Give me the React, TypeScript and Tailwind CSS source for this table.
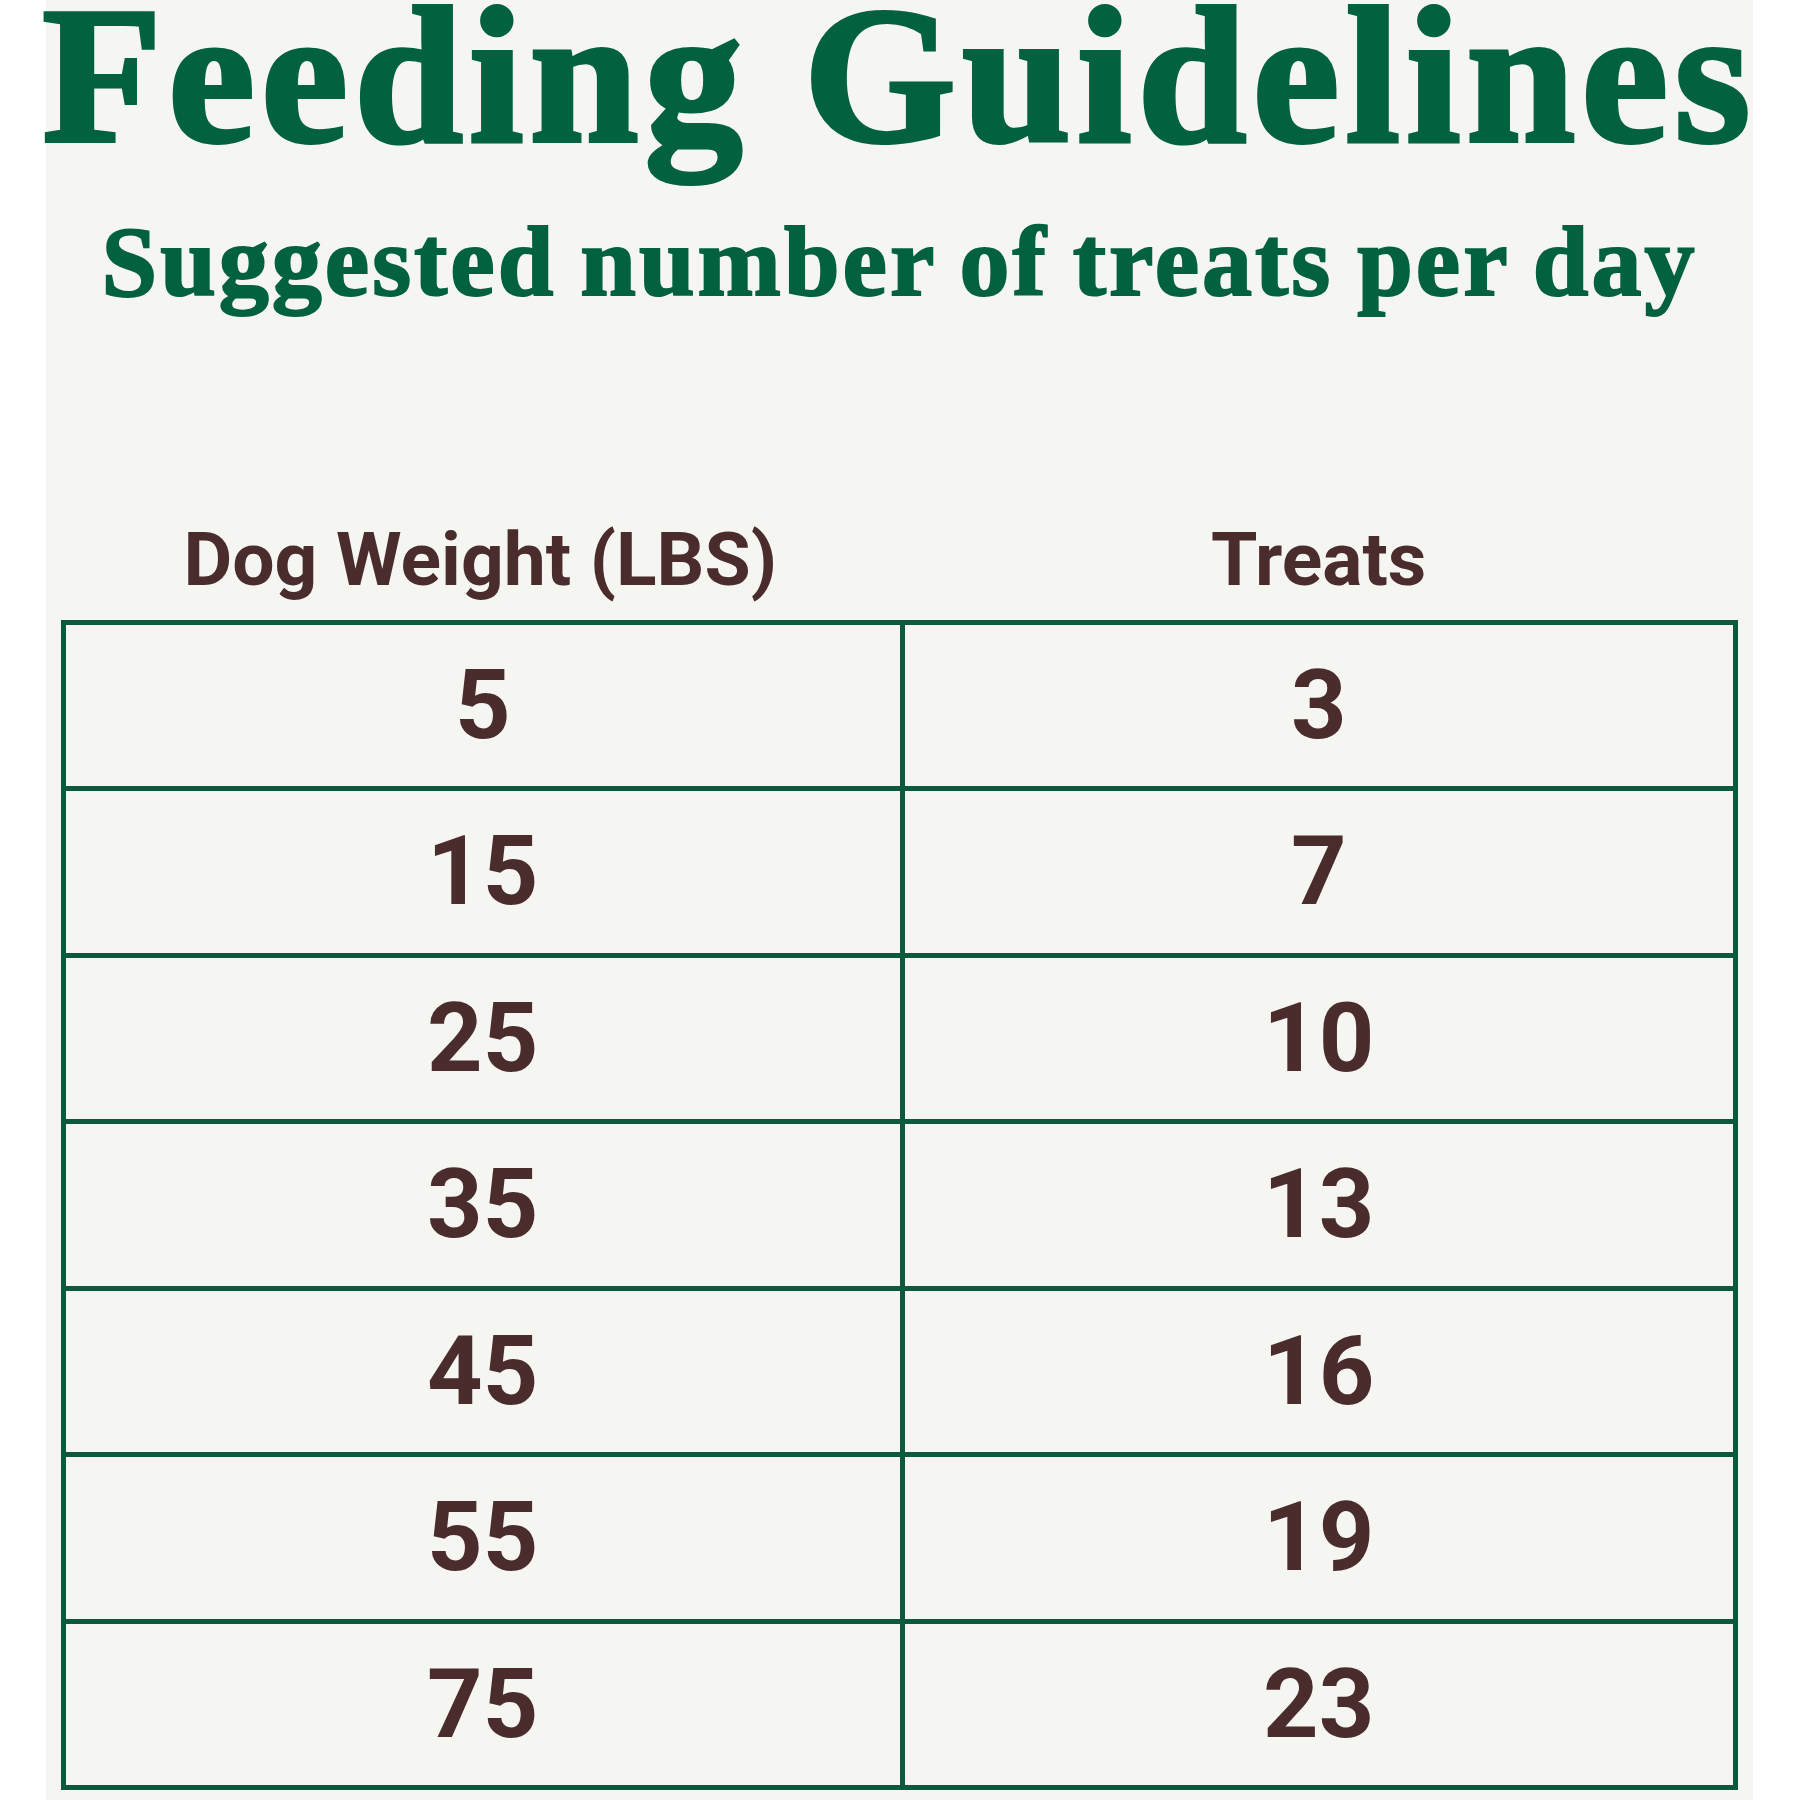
const rows: [string, string][] = [
  ["5", "3"],
  ["15", "7"],
  ["25", "10"],
  ["35", "13"],
  ["45", "16"],
  ["55", "19"],
  ["75", "23"],
];

export default function App() {
  return (
    <div className="h-[1800px] w-[1800px] overflow-hidden bg-white">
      <div className="ml-[46px] flex h-[1800px] w-[1707px] flex-col bg-[#f5f5f1]">
        <h1 className="mx-[-40px] mt-[-3px] whitespace-nowrap text-center font-['Liberation_Serif',serif] text-[196px] font-bold leading-[0.8] tracking-[6px] text-[#02623e] [-webkit-text-stroke:4px_#02623e]">
          Feeding Guidelines
        </h1>
        <h2 className="mt-[58px] whitespace-nowrap text-center font-['Liberation_Serif',serif] text-[100px] font-bold leading-none tracking-[3px] text-[#02623e] [word-spacing:-4px] [-webkit-text-stroke:2px_#02623e]">
          Suggested number of treats per day
        </h2>

        <div className="mt-[210px] grid grid-cols-2 px-[15px] font-['Roboto',sans-serif] text-[75px] font-bold leading-none text-[#4a2c2d]">
          <div className="text-center">Dog Weight (LBS)</div>
          <div className="text-center">Treats</div>
        </div>

        <div className="mx-[15px] mt-[23px] border-[5px] border-[#0c5a3b]">
          {rows.map(([weight, treats], i) => (
            <div
              key={weight}
              className={
                i === 0
                  ? "grid h-[161.5px] grid-cols-2"
                  : "grid h-[166.5px] grid-cols-2 border-t-[5px] border-[#0c5a3b]"
              }
            >
              <div className="flex items-center justify-center font-['Roboto',sans-serif] text-[97px] font-bold text-[#4a2c2d]">
                {weight}
              </div>
              <div className="flex items-center justify-center border-l-[5px] border-[#0c5a3b] font-['Roboto',sans-serif] text-[97px] font-bold text-[#4a2c2d]">
                {treats}
              </div>
            </div>
          ))}
        </div>
      </div>
    </div>
  );
}
